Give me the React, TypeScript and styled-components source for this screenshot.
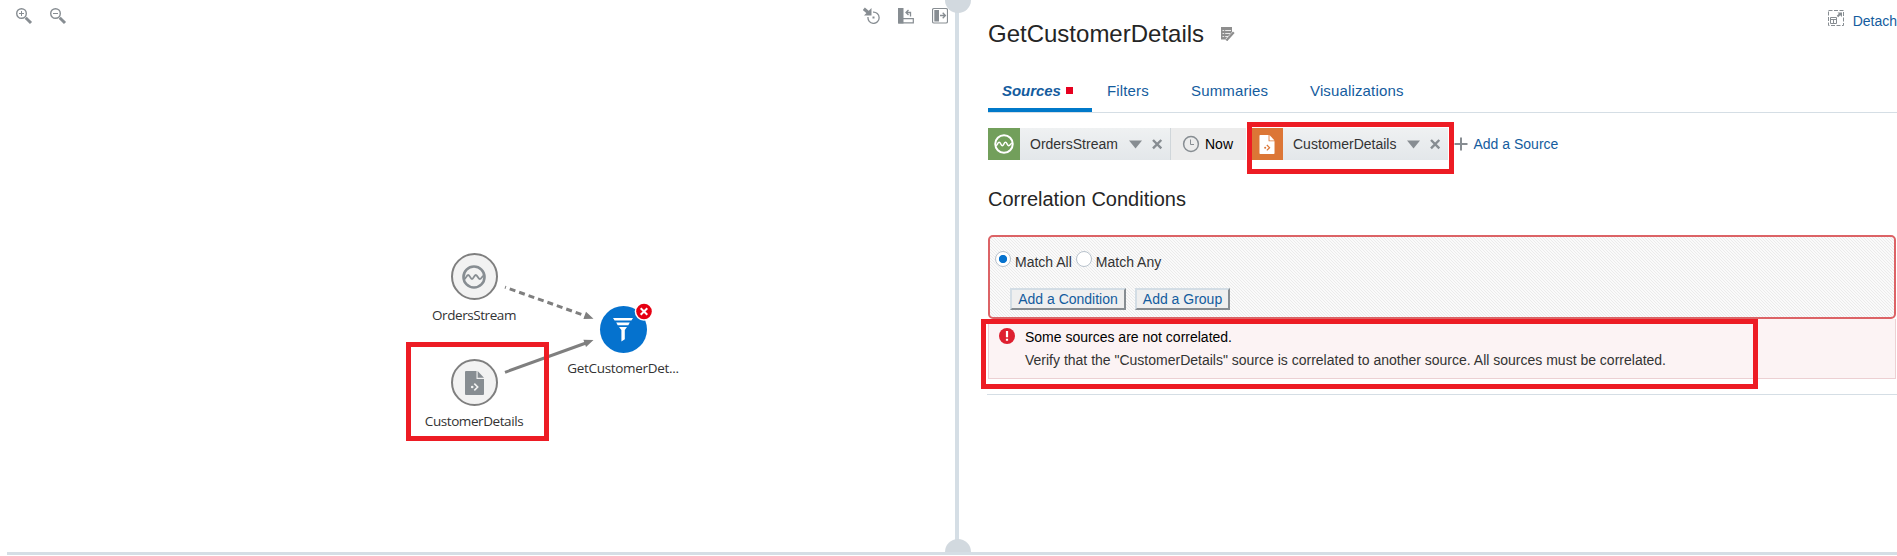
import React from "react";
import styled, { createGlobalStyle, css } from "styled-components";

const Global = createGlobalStyle`
  * { box-sizing: border-box; }
  body { margin: 0; background: #fff; overflow: hidden; color: #333;
    font: 14px/16px "Liberation Sans", Arial, sans-serif; }
  svg { display: block; flex: none; }
`;

const grey = "#878d92";
const line = "#d5dee5";
const link = "#145c9e";

const Page = styled.div`
  height: 556px;
  display: flex;
  flex-direction: column;
`;
const Split = styled.div`
  display: flex;
  height: 552px;
`;
const BottomBar = styled.div`
  height: 3px;
  margin-left: 7px;
  background: ${line};
`;
const CanvasPane = styled.section`
  width: 955px;
  display: flex;
  flex-direction: column;
`;
const CanvasToolbar = styled.div`
  display: flex;
  justify-content: space-between;
  height: 32px;
  padding: 7px 7px 0 15px;
`;
const ToolGroup = styled.div<{ $gap: number }>`
  display: flex;
  gap: ${(p) => p.$gap}px;
`;
const Canvas = styled.div`
  position: relative;
  flex: 1;
`;
const Edges = styled.svg`
  position: absolute;
  left: 0;
  top: 0;
`;
const Node = styled.div<{ $x: number; $y: number }>`
  position: absolute;
  left: ${(p) => p.$x - 80}px;
  top: ${(p) => p.$y}px;
  width: 160px;
  display: flex;
  flex-direction: column;
  align-items: center;
`;
const NodeLabel = styled.span<{ $spacing?: number }>`
  font: 13.5px/20px "Open Sans", "Noto Sans", sans-serif;
  letter-spacing: ${(p) => p.$spacing ?? -0.42}px;
  margin-top: 5px;
  white-space: nowrap;
`;
const ErrorBadge = styled.svg`
  position: absolute;
  left: 91px;
  top: -4px;
`;
const Divider = styled.div`
  position: relative;
  width: 4px;
  background: ${line};
`;
const Grip = styled.span<{ $edge: "top" | "bottom" }>`
  position: absolute;
  left: -10px;
  width: 26px;
  height: 13px;
  background: #d2d9df;
  ${(p) =>
    p.$edge === "top"
      ? css`top: 0; border-radius: 0 0 13px 13px;`
      : css`bottom: 0; border-radius: 13px 13px 0 0;`}
`;
const DetailPane = styled.section`
  flex: 1;
  min-width: 0;
  padding-left: 29px;
`;
const Header = styled.header`
  display: flex;
  align-items: flex-start;
  justify-content: space-between;
  height: 70px;
`;
const TitleRow = styled.div`
  display: flex;
  align-items: center;
  gap: 17px;
  margin-top: 20px;
`;
const Title = styled.h1`
  margin: 0;
  font-size: 24px;
  line-height: 28px;
  font-weight: 400;
  color: #252525;
`;
const DetachLink = styled.a`
  display: flex;
  align-items: center;
  gap: 8px;
  margin-top: 13px;
  color: ${link};
  svg { margin-top: -6px; }
`;
const Tabs = styled.nav`
  display: flex;
  height: 43px;
  border-bottom: 1px solid ${line};
  font-size: 15px;
  letter-spacing: 0.15px;
  color: ${link};
`;
const Tab = styled.a<{ $active?: boolean; $width: number }>`
  width: ${(p) => p.$width}px;
  padding: 13px 0 0 15px;
  height: 42px;
  display: flex;
  gap: 5px;
  ${(p) =>
    p.$active &&
    css`
      padding-left: 14px;
      font-weight: 700;
      font-style: italic;
      letter-spacing: -0.05px;
      border-bottom: 4px solid #0079c9;
    `}
`;
const Marker = styled.i`
  width: 7px;
  height: 7px;
  margin-top: 4px;
  background: #e6001f;
`;
const SourceRow = styled.div`
  display: flex;
  align-items: center;
  height: 32px;
  margin-top: 15px;
`;
const Chip = styled.div<{ $width: number; $divided?: boolean }>`
  width: ${(p) => p.$width}px;
  height: 32px;
  display: flex;
  align-items: center;
  background: linear-gradient(#eff1f2, #e3e7ea);
  border-right: ${(p) => (p.$divided ? "1px solid #d0d6da" : "none")};
`;
const ChipIcon = styled.span<{ $color: string }>`
  width: 32px;
  height: 32px;
  display: grid;
  place-items: center;
  background: ${(p) => p.$color};
`;
const ChipName = styled.span<{ $width: number }>`
  width: ${(p) => p.$width}px;
  padding-left: 10px;
  white-space: nowrap;
`;
const NowChip = styled.div`
  width: 75px;
  height: 32px;
  margin-right: 5px;
  padding-left: 11px;
  display: flex;
  align-items: center;
  gap: 5px;
  color: #000;
  background: #ececec;
`;
const HighlightBox = styled.div<{ $x: number; $y: number; $w: number; $h: number }>`
  position: absolute;
  left: ${(p) => p.$x}px;
  top: ${(p) => p.$y}px;
  width: ${(p) => p.$w}px;
  height: ${(p) => p.$h}px;
  border: 5px solid #ed1c24;
  pointer-events: none;
`;
const Anchor = styled.div`
  position: relative;
`;
const AddSource = styled.a`
  display: flex;
  align-items: center;
  gap: 5.5px;
  margin-left: 6px;
  color: ${link};
`;
const SectionTitle = styled.h2`
  margin: 27px 0 24px;
  font-size: 20px;
  line-height: 24px;
  font-weight: 400;
  color: #252525;
`;
const Conditions = styled.div`
  height: 84px;
  margin-right: 1px;
  padding: 14px 0 0 5px;
  border: 2px solid #dc6366;
  border-radius: 5px;
  background: linear-gradient(45deg, #fafafa 42%, #ebebeb 42% 58%, #fafafa 58%) 0 0 / 3px 3px;
`;
const Radios = styled.div`
  display: flex;
  gap: 4px;
`;
const Option = styled.label`
  display: flex;
  gap: 4px;
  span { padding-top: 3px; }
`;
const Radio = styled.i<{ $on?: boolean }>`
  width: 16px;
  height: 16px;
  border-radius: 50%;
  border: 1px solid #b8c2cc;
  background: ${(p) => (p.$on ? "radial-gradient(circle, #0572ce 3.7px, #fff 4.5px)" : "#fff")};
`;
const Buttons = styled.div`
  display: flex;
  gap: 9px;
  margin: 18px 0 0 15px;
`;
const Button = styled.button<{ $width: number }>`
  width: ${(p) => p.$width}px;
  height: 22px;
  padding: 0;
  font: inherit;
  color: ${link};
  background: #efefef;
  border: 2px solid;
  border-color: #d3dde5 #878d92 #878d92 #d3dde5;
`;
const Message = styled.div`
  display: flex;
  gap: 10px;
  height: 60px;
  margin-right: 1px;
  padding: 9px 0 0 10px;
  background: #fcf3f4;
  border: solid #ecd0d3;
  border-width: 0 1px 1px;
`;
const MessageText = styled.div`
  padding-top: 1px;
  p { margin: 0 0 7px; white-space: nowrap; }
  p:first-child { color: #000; }
`;
const Rule = styled.div`
  height: 1px;
  margin: 15px 0 0 -1px;
  background: ${line};
`;

const ZoomIcon = ({ plus }: { plus?: boolean }) => (
  <svg width="18" height="18" viewBox="0 0 18 18" fill="none" stroke={grey}>
    <circle cx="6.5" cy="6.5" r="4.8" strokeWidth="1.4" />
    <path d="M4 6.5h5" />
    {plus && <path d="M6.5 4v5" />}
    <path d="M10.7 10.7 16 16" strokeWidth="3" />
  </svg>
);
const LocateIcon = () => (
  <svg width="17" height="17" viewBox="0 0 17 17" fill="none" stroke={grey}>
    <path d="M10 5.2A5.6 5.6 0 1 1 5 10" strokeWidth="1.3" />
    <path d="M0.8 1.8 5.5 5.8" strokeWidth="3.2" />
    <path d="M8.5 1v7.5H1z" fill={grey} stroke="none" />
    <path d="M9.5 10.5h2" strokeWidth="2" />
  </svg>
);
const LayoutIcon = () => (
  <svg width="16" height="17" viewBox="0 0 16 17" fill="none" stroke={grey}>
    <path d="M0 1h5.5v15.5H0z" fill={grey} stroke="none" />
    <path d="M1 11.6h14.3v4.3H1z" strokeWidth="1.2" />
    <path d="M12.5 9.5V5.5H8M10.5 3 8 5.5 10.5 8" strokeWidth="1.3" />
  </svg>
);
const CollapseIcon = () => (
  <svg width="16" height="17" viewBox="0 0 16 17" fill="none" stroke={grey}>
    <rect x=".5" y="1.5" width="15" height="14.5" rx="1.5" strokeWidth="1.2" />
    <path d="M2.3 3h4.7v11.5H2.3z" fill={grey} stroke="none" />
    <path d="M8 8.5h5.3M10.7 5.8l2.7 2.7-2.7 2.7" strokeWidth="1.3" />
  </svg>
);
const WaveIcon = ({ size, color, thick = 2.4 }: { size: number; color: string; thick?: number }) => (
  <svg width={size} height={size} viewBox="0 0 24 24" fill="none" stroke={color}>
    <circle cx="12" cy="12" r="10.5" strokeWidth={thick} />
    <path
      d="M2.5 14C4 13.6 4.4 10 6.2 10S8.4 14 10 14 12 10 13.8 10 16 14 17.7 14 20 11 21.5 11"
      strokeWidth="1.8"
    />
  </svg>
);
const FileIcon = ({ w, h, color, mark }: { w: number; h: number; color: string; mark: string }) => (
  <svg width={w} height={h} viewBox="0 0 19 24">
    <path d="M1 0h10.5v8H19v15a1 1 0 0 1-1 1H1a1 1 0 0 1-1-1V1a1 1 0 0 1 1-1z" fill={color} />
    <path d="M12.6 0 19 6.8h-6.4z" fill={color} />
    <path d="m9.3 12.6 3.4 3.4-3.4 3.4" fill="none" stroke={mark} strokeWidth="1.6" />
    <circle cx="7.2" cy="16" r="1.3" fill={mark} />
  </svg>
);
const SourceNode = styled.span`
  width: 47px;
  height: 47px;
  display: grid;
  place-items: center;
  border-radius: 50%;
  border: 2px solid #7f7f7f;
  background: #f2f2f2;
`;
const QueryNode = styled(SourceNode)`
  border: none;
  background: #0572ce;
`;
const FunnelIcon = () => (
  <svg width="22" height="26" viewBox="0 0 22 26" fill="#fff">
    <path d="M1 1h20l-1.6 2.6H2.6zM4.2 5.4h13.6l-1.5 2.8H5.7zM7 10h8l-2.2 3v9.3l-3.4 2.2V13z" />
  </svg>
);
const ChipActions = () => (
  <svg width="34" height="14" viewBox="0 0 34 14">
    <path d="M0 3.5h13L6.5 11.5z" fill={grey} />
    <path d="m24 3 8.3 8.3m0-8.3L24 11.3" stroke={grey} strokeWidth="2.4" />
  </svg>
);
const ClockIcon = () => (
  <svg width="18" height="18" viewBox="0 0 18 18" fill="none" stroke={grey}>
    <circle cx="9" cy="9" r="7.4" strokeWidth="1.5" />
    <path d="M8.5 4.5v5H12" />
  </svg>
);
const EditIcon = () => (
  <svg width="14" height="14" viewBox="0 0 14 14" fill="none">
    <path d="M0 0h11v6L5 12.5H0z" fill="#8e8e8e" />
    <path d="M1.5 3.5h1.7m1 0H10M1.5 6.5h1.7m1 0H9M1.5 9.5h1.7m1 0H7" stroke="#fff" strokeWidth=".8" />
    <path d="M13 5.5 6 13" stroke="#fff" strokeWidth="3.6" />
    <path d="M12.8 5.2 6.5 12.2 5.5 13.6" stroke="#8e8e8e" strokeWidth="2.2" />
  </svg>
);
const DetachIcon = () => (
  <svg width="17" height="17" viewBox="0 0 17 17" fill="none" stroke={grey}>
    <rect x=".5" y=".5" width="15" height="15" strokeDasharray="4 1.5" />
    <path d="M2.5 7.5h6v6h-6zM2.5 9.5h6M5.5 9.5v4" />
    <path d="M9.5 6.5 12 4" strokeWidth="2" />
    <path d="M9.5 2.5H14V7z" fill={grey} stroke="none" />
  </svg>
);

export default function App() {
  return (
    <Page>
      <Global />
      <Split>
        <CanvasPane>
          <CanvasToolbar>
            <ToolGroup $gap={16}>
              <ZoomIcon plus />
              <ZoomIcon />
            </ToolGroup>
            <ToolGroup $gap={18}>
              <LocateIcon />
              <LayoutIcon />
              <CollapseIcon />
            </ToolGroup>
          </CanvasToolbar>
          <Canvas>
            <Edges width="955" height="520" viewBox="0 32 955 520">
              <g stroke="#7f7f7f" strokeWidth="3">
                <path d="M505 287.2 586 316" strokeDasharray="6 4" strokeDashoffset="5" />
                <path d="M505 372.3 586 343" />
              </g>
              <path d="M593.5 318.8 583.4 319 586 311.8zM593.5 340 583.4 339.8 586 347z" fill="#7f7f7f" />
            </Edges>
            <Node $x={474} $y={221}>
              <SourceNode>
                <WaveIcon size={24} color={grey} thick={2.6} />
              </SourceNode>
              <NodeLabel>OrdersStream</NodeLabel>
            </Node>
            <Node $x={474} $y={327}>
              <SourceNode>
                <FileIcon w={19} h={24} color={grey} mark="#f2f2f2" />
              </SourceNode>
              <NodeLabel>CustomerDetails</NodeLabel>
            </Node>
            <Node $x={623} $y={274}>
              <QueryNode>
                <FunnelIcon />
              </QueryNode>
              <ErrorBadge width="20" height="20" viewBox="0 0 20 20">
                <circle cx="10" cy="9.5" r="9.3" fill="#fff" />
                <circle cx="10" cy="9.5" r="7.8" fill="#e60012" />
                <path d="m6.7 6.2 6.6 6.6m0-6.6-6.6 6.6" stroke="#fff" strokeWidth="2" />
              </ErrorBadge>
              <NodeLabel $spacing={-0.3}>GetCustomerDet...</NodeLabel>
            </Node>
            <HighlightBox $x={406} $y={310} $w={143} $h={99} />
          </Canvas>
        </CanvasPane>
        <Divider>
          <Grip $edge="top" />
          <Grip $edge="bottom" />
        </Divider>
        <DetailPane>
          <Header>
            <TitleRow>
              <Title>GetCustomerDetails</Title>
              <EditIcon />
            </TitleRow>
            <DetachLink>
              <DetachIcon />
              Detach
            </DetachLink>
          </Header>
          <Tabs>
            <Tab $active $width={104}>
              Sources
              <Marker />
            </Tab>
            <Tab $width={84}>Filters</Tab>
            <Tab $width={119}>Summaries</Tab>
            <Tab $width={120}>Visualizations</Tab>
          </Tabs>
          <SourceRow>
            <Chip $width={183} $divided>
              <ChipIcon $color="#729f5b">
                <WaveIcon size={20} color="#fff" />
              </ChipIcon>
              <ChipName $width={109}>OrdersStream</ChipName>
              <ChipActions />
            </Chip>
            <NowChip>
              <ClockIcon />
              Now
            </NowChip>
            <Anchor>
              <Chip $width={197}>
                <ChipIcon $color="#dc7636">
                  <FileIcon w={16} h={19} color="#fff" mark="#dc7636" />
                </ChipIcon>
                <ChipName $width={124}>CustomerDetails</ChipName>
                <ChipActions />
              </Chip>
              <HighlightBox $x={-4} $y={-6} $w={207} $h={52} />
            </Anchor>
            <AddSource>
              <svg width="14" height="14" viewBox="0 0 14 14">
                <path d="M7 .5v13M.5 7h13" stroke={grey} strokeWidth="2" />
              </svg>
              Add a Source
            </AddSource>
          </SourceRow>
          <SectionTitle>Correlation Conditions</SectionTitle>
          <Conditions>
            <Radios>
              <Option>
                <Radio $on />
                <span>Match All</span>
              </Option>
              <Option>
                <Radio />
                <span>Match Any</span>
              </Option>
            </Radios>
            <Buttons>
              <Button $width={116}>Add a Condition</Button>
              <Button $width={95}>Add a Group</Button>
            </Buttons>
          </Conditions>
          <Anchor>
            <Message>
              <svg width="16" height="16" viewBox="0 0 16 16">
                <circle cx="8" cy="8" r="8" fill="#de1f2f" />
                <path d="M8 3v6.2M8 10.8v2" stroke="#fff" strokeWidth="2.2" />
              </svg>
              <MessageText>
                <p>Some sources are not correlated.</p>
                <p>
                  Verify that the "CustomerDetails" source is correlated to another source. All sources must be
                  correlated.
                </p>
              </MessageText>
            </Message>
            <HighlightBox $x={-7} $y={0} $w={777} $h={70} />
          </Anchor>
          <Rule />
        </DetailPane>
      </Split>
      <BottomBar />
    </Page>
  );
}
